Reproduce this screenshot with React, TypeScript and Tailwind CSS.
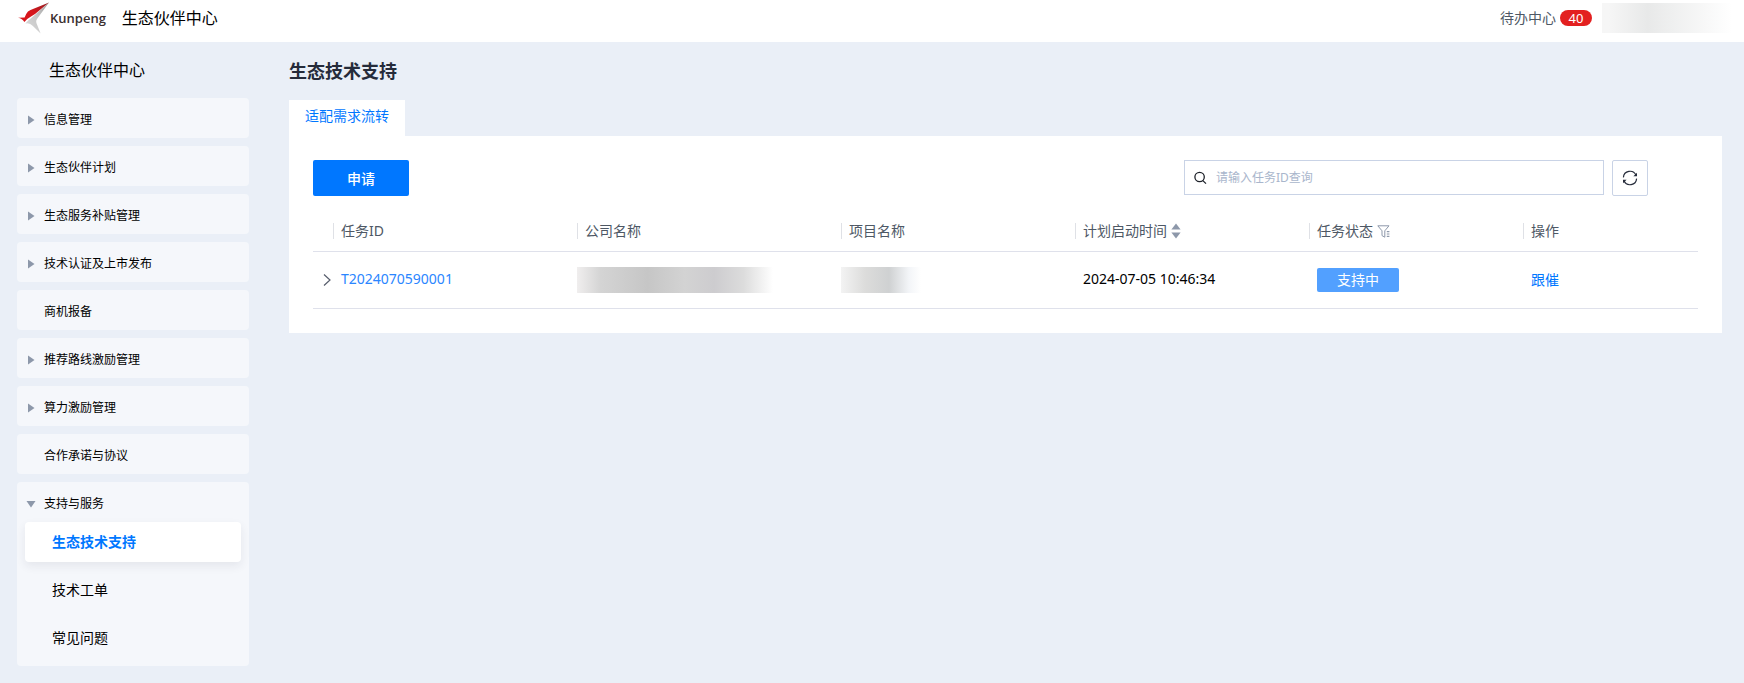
import { useState } from 'react'

interface MenuItem {
  label: string
  hasChildren: boolean
}

const menuItems: MenuItem[] = [
  { label: '信息管理', hasChildren: true },
  { label: '生态伙伴计划', hasChildren: true },
  { label: '生态服务补贴管理', hasChildren: true },
  { label: '技术认证及上市发布', hasChildren: true },
  { label: '商机报备', hasChildren: false },
  { label: '推荐路线激励管理', hasChildren: true },
  { label: '算力激励管理', hasChildren: true },
  { label: '合作承诺与协议', hasChildren: false },
]

const supportItems = ['生态技术支持', '技术工单', '常见问题']

function Logo() {
  return (
    <svg width="32" height="32" viewBox="0 0 32 32" aria-hidden="true">
      <defs>
        <linearGradient id="wing" x1="0" y1="1" x2="1" y2="0">
          <stop offset="0.5" stopColor="#d7151b" />
          <stop offset="1" stopColor="#8f2226" />
        </linearGradient>
        <linearGradient id="tail" x1="0" y1="1" x2="1" y2="0">
          <stop offset="0" stopColor="#dcdcdc" />
          <stop offset="0.5" stopColor="#c8c8c8" />
          <stop offset="1" stopColor="#9c9c9c" />
        </linearGradient>
      </defs>
      <path d="M31 0.5 L13 16.2 Q10 18 7.4 21.4 Q12 20.6 14.6 23.8 L22.6 31.5 L18.4 21 Q17.6 19 19 17 Z" fill="url(#tail)" />
      <path d="M31 0.5 L12.5 8 Q9.6 9.2 8.2 12 L6.6 15.6 L0 15.8 Q4.4 16.6 6.4 20 Q9.4 16.2 13 14.4 Q15 13.4 17 12 Z" fill="url(#wing)" />
    </svg>
  )
}

function Arrow({ open }: { open: boolean }) {
  return (
    <svg width="10" height="10" viewBox="0 0 10 10" fill="#8d98aa" aria-hidden="true">
      {open ? <path d="M0.5 2 H9.5 L5 8.5 Z" /> : <path d="M2 0.5 L8.5 5 L2 9.5 Z" />}
    </svg>
  )
}

function SearchIcon() {
  return (
    <svg width="13" height="14" viewBox="0 0 13 14" fill="none" stroke="#1d2129" strokeWidth="1.3" aria-hidden="true">
      <circle cx="5.6" cy="6" r="4.7" />
      <path d="M8.8 9.6 L12 12.6" />
    </svg>
  )
}

function RefreshIcon() {
  return (
    <svg width="16" height="16" viewBox="0 0 16 16" fill="none" stroke="#252b3a" strokeWidth="1.2" aria-hidden="true">
      <path d="M1.4 7.4 A6.6 6.6 0 0 1 14 5.2" />
      <path d="M14.6 8.6 A6.6 6.6 0 0 1 2 10.8" />
      <path d="M15 2.8 V6.2 H11.4 Z" fill="#252b3a" stroke="none" />
      <path d="M1 13.2 V9.8 H4.6 Z" fill="#252b3a" stroke="none" />
    </svg>
  )
}

function SortIcon() {
  return (
    <svg width="10" height="16" viewBox="0 0 10 16" fill="#8d98aa" aria-hidden="true">
      <path d="M5 0.5 L9.6 6.5 H0.4 Z" />
      <path d="M5 15.5 L9.6 9.5 H0.4 Z" />
    </svg>
  )
}

function FilterIcon() {
  return (
    <svg width="13" height="13" viewBox="0 0 13 13" fill="none" stroke="#8d98aa" aria-hidden="true">
      <path d="M0.8 0.8 H12 L7.8 5.8 V12.2 L5 10.6 V5.8 Z" />
      <path d="M9.8 6.6 H12.4 M9.8 9 H12.4 M9.8 11.4 H12.4" strokeWidth="1.2" />
    </svg>
  )
}

function Heading({ label, children }: { label: string; children?: React.ReactNode }) {
  return (
    <th className="p-0 pt-4 text-left font-normal">
      <div className="flex h-4 items-center gap-1 border-l border-[#dfe1e6] pl-[7px] leading-4">
        {label}
        {children}
      </div>
    </th>
  )
}

export default function App() {
  const [keyword, setKeyword] = useState('')
  const [active, setActive] = useState('生态技术支持')

  return (
    <div className="min-h-screen bg-[#eaeff7] font-['Noto_Sans','Noto_Sans_CJK_SC',sans-serif] text-sm text-black">
      <header className="flex h-[42px] items-center bg-white pb-[6px] pl-[18px]">
        <a href="#" className="flex items-center">
          <Logo />
          <span className="font-['Open_Sans','Noto_Sans',sans-serif] text-[13px] font-semibold text-[#3a2f2f]">
            Kunpeng
          </span>
        </a>
        <span className="ml-4 text-base leading-6">生态伙伴中心</span>
        <div className="ml-auto flex items-center">
          <a href="#" className="text-[#4e5865]">待办中心</a>
          <span className="ml-1 flex h-4 w-8 items-center justify-center rounded-full bg-[#e32020] text-[13px] text-white">
            40
          </span>
          <div className="mr-3 ml-[10px] h-[30px] w-[130px] bg-linear-to-r from-[#f6f6f6] from-5% via-[#e8e9e9] via-35% to-white" />
        </div>
      </header>

      <div className="flex items-start pr-[22px] pl-[17px]">
        <aside className="w-[232px] shrink-0">
          <h2 className="flex h-14 items-center pl-8 text-base">生态伙伴中心</h2>
          <nav className="flex flex-col gap-2">
            {menuItems.map((item) => (
              <button
                key={item.label}
                className="flex h-10 items-center rounded bg-[#f5f7fb] pt-[3px] pl-[9px] text-left text-xs"
              >
                <span className="w-[18px]">{item.hasChildren && <Arrow open={false} />}</span>
                {item.label}
              </button>
            ))}
            <div className="rounded bg-[#f5f7fb] pb-2">
              <button className="flex h-10 w-full items-center pt-[3px] pl-[9px] text-left text-xs">
                <span className="w-[18px]">
                  <Arrow open />
                </span>
                支持与服务
              </button>
              <div className="flex flex-col gap-2 px-2">
                {supportItems.map((label) => (
                  <button
                    key={label}
                    onClick={() => setActive(label)}
                    className={
                      label === active
                        ? 'h-10 rounded bg-white pl-[27px] text-left font-bold text-[#0077ff] shadow-[0_4px_10px_rgba(37,43,58,0.08)]'
                        : 'h-10 rounded pl-[27px] text-left'
                    }
                  >
                    {label}
                  </button>
                ))}
              </div>
            </div>
          </nav>
        </aside>

        <main className="ml-10 min-w-0 flex-1">
          <h1 className="flex h-[58px] items-center text-lg font-bold text-[#252b3a]">生态技术支持</h1>
          <div className="flex">
            <button className="h-9 bg-white px-4 pb-1 text-[#0077ff]">适配需求流转</button>
          </div>

          <section className="bg-white p-6">
            <div className="flex items-start">
              <button className="h-9 w-24 rounded-xs bg-[#0077ff] pt-0.5 font-medium text-white">申请</button>
              <label className="ml-auto flex h-[35px] w-[420px] items-center border border-[#c9d3e6] pl-[9px]">
                <SearchIcon />
                <input
                  aria-label="任务ID"
                  value={keyword}
                  onChange={(e) => setKeyword(e.target.value)}
                  placeholder="请输入任务ID查询"
                  className="ml-[9px] min-w-0 flex-1 text-xs outline-none placeholder:text-[#a9b6cc]"
                />
              </label>
              <button
                aria-label="刷新"
                className="mr-[50px] ml-2 flex size-9 items-center justify-center rounded-xs border border-[#c9d3e6]"
              >
                <RefreshIcon />
              </button>
            </div>

            <table className="w-full table-fixed border-collapse">
              <colgroup>
                <col className="w-5" />
                <col className="w-[244px]" />
                <col className="w-[264px]" />
                <col className="w-[234px]" />
                <col className="w-[234px]" />
                <col className="w-[214px]" />
                <col />
              </colgroup>
              <thead>
                <tr className="h-[55px] border-b border-[#dfe1eb] text-[#4e5865]">
                  <th />
                  <Heading label="任务ID" />
                  <Heading label="公司名称" />
                  <Heading label="项目名称" />
                  <Heading label="计划启动时间">
                    <button aria-label="排序">
                      <SortIcon />
                    </button>
                  </Heading>
                  <Heading label="任务状态">
                    <button aria-label="筛选">
                      <FilterIcon />
                    </button>
                  </Heading>
                  <Heading label="操作" />
                </tr>
              </thead>
              <tbody>
                <tr className="h-[57px] border-b border-[#dfe1eb]">
                  <td className="p-0">
                    <button aria-label="展开" className="block pl-[9px]">
                      <svg width="10" height="14" viewBox="0 0 10 14" fill="none" stroke="#575d6c" strokeWidth="1.2">
                        <path d="M2 1.5 L8 7 L2 12.5" />
                      </svg>
                    </button>
                  </td>
                  <td className="p-0 pb-0.5 pl-2">
                    <a href="#" className="text-[#2a86ff]">T2024070590001</a>
                  </td>
                  <td className="p-0">
                    <div className="h-[26px] w-[196px] bg-[linear-gradient(90deg,#f0eeee,#d4d4d4_12%,#c6c6c6_36%,#d3d3d3_55%,#cdcccf_70%,#dcdcdc_85%,#fff)]" />
                  </td>
                  <td className="p-0">
                    <div className="h-[26px] w-20 bg-[linear-gradient(90deg,#f3f3f3,#dcdcdb_30%,#cfd1d2_60%,#f3f5f8_85%,#fff)]" />
                  </td>
                  <td className="p-0 pb-0.5 pl-2">2024-07-05 10:46:34</td>
                  <td className="p-0 pl-2">
                    <span className="flex h-6 w-[82px] items-center justify-center rounded-xs bg-[#52a0ff] text-white">
                      支持中
                    </span>
                  </td>
                  <td className="p-0 pl-2">
                    <button className="text-[#0077ff]">跟催</button>
                  </td>
                </tr>
              </tbody>
            </table>
          </section>
        </main>
      </div>
    </div>
  )
}
